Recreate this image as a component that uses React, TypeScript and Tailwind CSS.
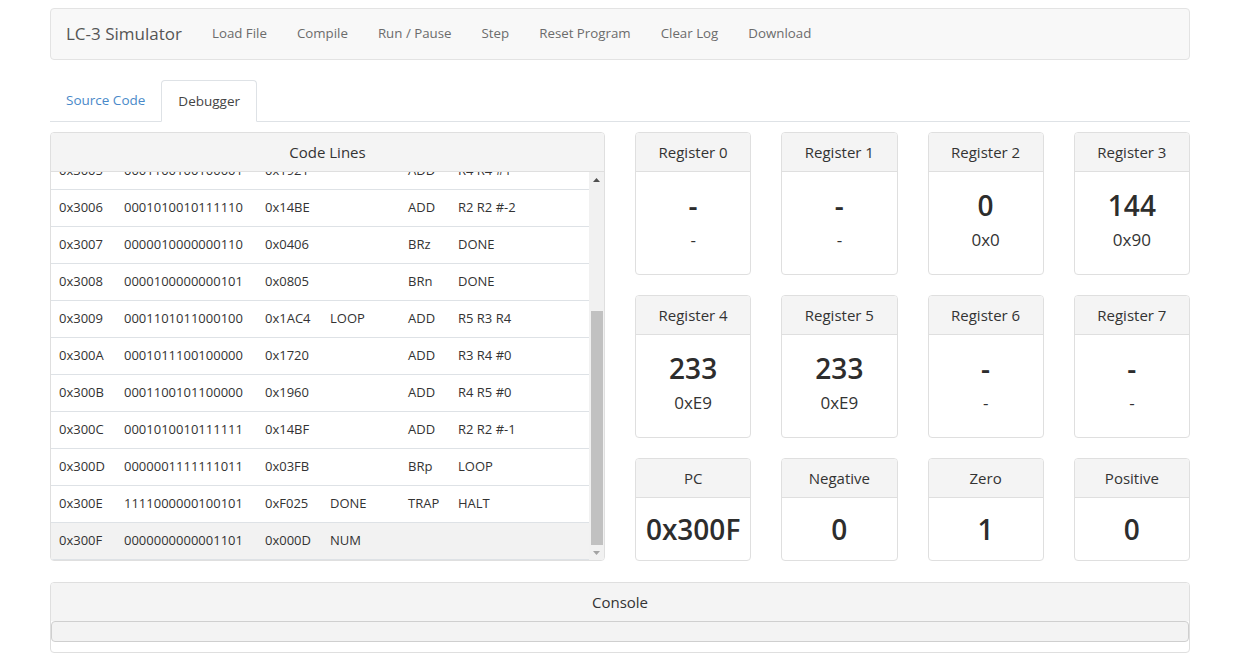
import React, { useLayoutEffect, useRef } from "react";

const navLinks = ["Load File", "Compile", "Run / Pause", "Step", "Reset Program", "Clear Log", "Download"];

const codeLines = [
  { addr: "0x3000", bin: "0010010000001110", hex: "0x240E", label: "", op: "LD", args: "R2 NUM" },
  { addr: "0x3001", bin: "0101011011100000", hex: "0x56E0", label: "", op: "AND", args: "R3 R3 #0" },
  { addr: "0x3002", bin: "0101100100100000", hex: "0x5920", label: "", op: "AND", args: "R4 R4 #0" },
  { addr: "0x3003", bin: "0101101101100000", hex: "0x5B60", label: "", op: "AND", args: "R5 R5 #0" },
  { addr: "0x3004", bin: "0001011011100001", hex: "0x16E1", label: "", op: "ADD", args: "R3 R3 #1" },
  { addr: "0x3005", bin: "0001100100100001", hex: "0x1921", label: "", op: "ADD", args: "R4 R4 #1" },
  { addr: "0x3006", bin: "0001010010111110", hex: "0x14BE", label: "", op: "ADD", args: "R2 R2 #-2" },
  { addr: "0x3007", bin: "0000010000000110", hex: "0x0406", label: "", op: "BRz", args: "DONE" },
  { addr: "0x3008", bin: "0000100000000101", hex: "0x0805", label: "", op: "BRn", args: "DONE" },
  { addr: "0x3009", bin: "0001101011000100", hex: "0x1AC4", label: "LOOP", op: "ADD", args: "R5 R3 R4" },
  { addr: "0x300A", bin: "0001011100100000", hex: "0x1720", label: "", op: "ADD", args: "R3 R4 #0" },
  { addr: "0x300B", bin: "0001100101100000", hex: "0x1960", label: "", op: "ADD", args: "R4 R5 #0" },
  { addr: "0x300C", bin: "0001010010111111", hex: "0x14BF", label: "", op: "ADD", args: "R2 R2 #-1" },
  { addr: "0x300D", bin: "0000001111111011", hex: "0x03FB", label: "", op: "BRp", args: "LOOP" },
  { addr: "0x300E", bin: "1111000000100101", hex: "0xF025", label: "DONE", op: "TRAP", args: "HALT" },
  { addr: "0x300F", bin: "0000000000001101", hex: "0x000D", label: "NUM", op: "", args: "" },
];

const registers = [
  { name: "Register 0", dec: "-", hex: "-" },
  { name: "Register 1", dec: "-", hex: "-" },
  { name: "Register 2", dec: "0", hex: "0x0" },
  { name: "Register 3", dec: "144", hex: "0x90" },
  { name: "Register 4", dec: "233", hex: "0xE9" },
  { name: "Register 5", dec: "233", hex: "0xE9" },
  { name: "Register 6", dec: "-", hex: "-" },
  { name: "Register 7", dec: "-", hex: "-" },
];

const flags = [
  { name: "PC", value: "0x300F" },
  { name: "Negative", value: "0" },
  { name: "Zero", value: "1" },
  { name: "Positive", value: "0" },
];

const CardHeader = ({ children }: { children: React.ReactNode }) => (
  <div className="h-[39px] flex items-center justify-center bg-[#f4f4f4] border-b border-[#dfdfdf] text-[15px] text-[#333]">
    {children}
  </div>
);

const App: React.FC = () => {
  const listRef = useRef<HTMLDivElement>(null);

  useLayoutEffect(() => {
    if (listRef.current) listRef.current.scrollTop = listRef.current.scrollHeight;
  }, []);

  const current = "0x300F";

  return (
    <div className="min-h-screen bg-white pt-2 font-['Open_Sans',sans-serif] text-[#333]">
      <div className="ml-[50px] w-[1140px]">
        {/* navbar */}
        <nav className="h-[52px] flex items-center gap-[30px] pl-[15px] bg-[#f8f8f8] border border-[#e3e3e3] rounded">
          <span className="text-[17px] text-[#555]">LC-3 Simulator</span>
          {navLinks.map((l) => (
            <span key={l} className="text-[13.3px] text-[#6c6c6c] cursor-pointer">
              {l}
            </span>
          ))}
        </nav>

        {/* tabs */}
        <div className="mt-5 flex border-b border-[#dee2e6] text-[13.5px]">
          <div className="h-[41px] px-4 flex items-center text-[#4a89c9] cursor-pointer">Source Code</div>
          <div className="h-[42px] -mb-px px-4 flex items-center text-[#444] bg-white border border-[#dee2e6] border-b-white rounded-t">
            Debugger
          </div>
        </div>

        <div className="mt-[10px] flex gap-[30px]">
          {/* code lines */}
          <div className="w-[555px] h-[429px] border border-[#dfdfdf] rounded flex flex-col overflow-hidden">
            <CardHeader>Code Lines</CardHeader>
            <div className="flex h-[388px]">
              <div ref={listRef} className="flex-1 overflow-hidden">
                {codeLines.map((c) => (
                  <div
                    key={c.addr}
                    className={
                      "h-[37px] grid grid-cols-[65px_141px_65px_78px_50px_1fr] items-center pl-2 text-[13px] border-b border-[#dee2e6] " +
                      (c.addr === current ? "bg-[#f2f2f2]" : "bg-white")
                    }
                  >
                    <span>{c.addr}</span>
                    <span>{c.bin}</span>
                    <span>{c.hex}</span>
                    <span>{c.label}</span>
                    <span>{c.op}</span>
                    <span>{c.args}</span>
                  </div>
                ))}
              </div>
              {/* scrollbar */}
              <div className="w-[15px] flex flex-col bg-[#f1f1f1]">
                <div className="h-[15px] flex items-center justify-center">
                  <svg width="7" height="4" viewBox="0 0 7 4">
                    <path d="M0 4 L3.5 0 L7 4 Z" fill="#505050" />
                  </svg>
                </div>
                <div className="flex-1 flex flex-col justify-end items-center">
                  <div className="w-[12px] h-[234px] bg-[#c1c1c1]" />
                </div>
                <div className="h-[15px] flex items-center justify-center">
                  <svg width="7" height="4" viewBox="0 0 7 4">
                    <path d="M0 0 L7 0 L3.5 4 Z" fill="#a3a3a3" />
                  </svg>
                </div>
              </div>
            </div>
          </div>

          {/* registers */}
          <div className="w-[555px] grid grid-cols-4 gap-x-[30px] gap-y-5">
            {registers.map((r) => (
              <div key={r.name} className="h-[143px] border border-[#dfdfdf] rounded overflow-hidden">
                <CardHeader>{r.name}</CardHeader>
                <div className="flex flex-col items-center pt-4">
                  <span className="text-[28px] leading-[34px] font-semibold text-[#2d2d2d]">{r.dec}</span>
                  <span className="mt-1.5 text-[17px] leading-[24px]">{r.hex}</span>
                </div>
              </div>
            ))}
            {flags.map((f) => (
              <div key={f.name} className="h-[103px] border border-[#dfdfdf] rounded overflow-hidden flex flex-col">
                <CardHeader>{f.name}</CardHeader>
                <div className="flex-1 flex items-center justify-center text-[28px] font-semibold text-[#2d2d2d]">
                  {f.value}
                </div>
              </div>
            ))}
          </div>
        </div>

        {/* console */}
        <div className="mt-[21px] border border-[#dfdfdf] rounded overflow-hidden">
          <div className="h-[38px] flex items-center justify-center bg-[#f4f4f4] text-[15px]">Console</div>
          <div className="h-[21px] bg-[#f3f3f3] border border-[#cfcfcf] rounded" />
          <div className="h-[10px]" />
        </div>
      </div>
    </div>
  );
};

export default App;
